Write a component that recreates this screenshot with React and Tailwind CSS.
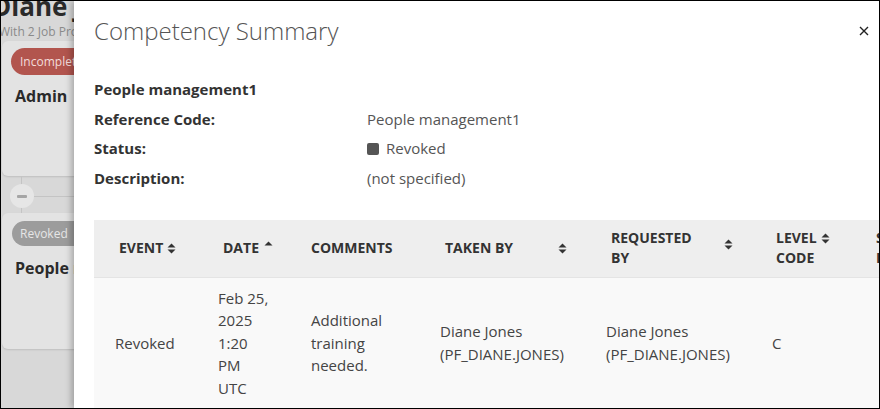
import React from "react";

const SortBoth = () => (
  <svg width="9" height="11" viewBox="0 0 9 11" className="shrink-0 inline-block">
    <path d="M4.5 0.5 L8.5 4.5 L0.5 4.5 Z" fill="#333" />
    <path d="M4.5 10.5 L8.5 6.5 L0.5 6.5 Z" fill="#333" />
  </svg>
);
const SortUp = () => (
  <svg width="9" height="6" viewBox="0 0 9 6" className="shrink-0">
    <path d="M4.5 0.5 L8.5 4.5 L0.5 4.5 Z" fill="#333" />
  </svg>
);

export default function App() {
  return (
    <div
      className="w-[880px] h-[409px] border border-black flex overflow-hidden bg-white text-[#333]"
      style={{ fontFamily: '"Open Sans", "Noto Sans", sans-serif' }}
    >
      {/* dimmed background */}
      <div className="w-[73px] shrink-0 bg-[#d8d8d8] flex flex-col overflow-hidden">
        <div className="ml-[-9px] mt-[-10px] text-[26px] font-bold leading-[30px] text-[#2a2a2a] whitespace-nowrap">
          Diane Jones
        </div>
        <div className="ml-[-2px] mt-[3px] text-[12px] leading-[16px] text-[#8a8a8a] whitespace-nowrap">
          With 2 Job Profiles
        </div>
        <div className="ml-[1px] mt-[1px] h-[135px] w-[80px] shrink-0 rounded-[6px] bg-[#e3e3e3] shadow-[0_1px_2px_rgba(0,0,0,0.12)] pt-[7px] pl-[9px]">
          <div className="h-[27px] w-[90px] rounded-full bg-[#b2554e] pl-[9px] text-[12px] leading-[27px] text-[#f3dcda] whitespace-nowrap">
            Incomplete
          </div>
          <div className="mt-[11px] ml-[4px] text-[16px] font-bold leading-[20px] text-[#2a2a2a] whitespace-nowrap">
            Admin
          </div>
        </div>
        <div className="relative h-[37px] shrink-0">
          <div className="absolute left-[20px] top-0 h-full w-px bg-[#c4c4c4]" />
          <div className="absolute left-[33px] top-[20px] h-px w-[50px] bg-[#c4c4c4]" />
          <div className="absolute left-[9px] top-[8px] h-[24px] w-[24px] rounded-full bg-[#e6e6e6] flex items-center justify-center">
            <div className="h-[3px] w-[10px] rounded-[1px] bg-[#a5a5a5]" />
          </div>
        </div>
        <div className="ml-[1px] h-[136px] w-[80px] shrink-0 rounded-[6px] bg-[#e3e3e3] shadow-[0_1px_2px_rgba(0,0,0,0.12)] pt-[8px] pl-[10px]">
          <div className="h-[25px] w-[90px] rounded-full bg-[#9c9c9c] pl-[8px] text-[12px] leading-[25px] text-[#e6e6e6] whitespace-nowrap">
            Revoked
          </div>
          <div className="mt-[12px] ml-[3px] text-[16px] font-bold leading-[20px] text-[#2a2a2a] whitespace-nowrap">
            People management1
          </div>
        </div>
      </div>

      {/* modal */}
      <div className="flex-1 min-w-0 bg-white shadow-[-3px_0_6px_rgba(0,0,0,0.25)] z-10 flex flex-col overflow-hidden pl-[20px]">
        <div className="flex items-start justify-between pt-[12px] pr-[10px]">
          <div className="text-[24px] font-light leading-[36px] text-[#555]">Competency Summary</div>
          <svg width="10" height="10" viewBox="0 0 10 10" className="mt-[13px]">
            <path d="M1 1 L9 9 M9 1 L1 9" stroke="#222" strokeWidth="1.4" />
          </svg>
        </div>

        <div className="mt-[26px] text-[15px] leading-[29.7px]">
          <div className="font-bold text-[#333]">People management1</div>
          <div className="flex">
            <div className="w-[273px] font-bold text-[#333]">Reference Code:</div>
            <div className="text-[#555]">People management1</div>
          </div>
          <div className="flex">
            <div className="w-[273px] font-bold text-[#333]">Status:</div>
            <div className="flex items-center gap-[7px] text-[#555]">
              <span className="inline-block h-[12px] w-[12px] rounded-[2px] bg-[#555]" />
              Revoked
            </div>
          </div>
          <div className="flex">
            <div className="w-[273px] font-bold text-[#333]">Description:</div>
            <div className="text-[#555]">(not specified)</div>
          </div>
        </div>

        <div className="mt-[26px] flex-1 overflow-hidden">
          <div className="w-[900px]">
            {/* header */}
            <div className="flex h-[58px] bg-[#eeeeee] border-b border-[#e4e4e4] text-[14px] font-bold leading-[20px] text-[#333] uppercase">
              <div className="w-[104px] pl-[25px] flex items-center gap-[4px]">
                <span>Event</span>
                <SortBoth />
              </div>
              <div className="w-[93px] pl-[25px] flex items-center gap-[5px]">
                <span>Date</span>
                <span className="mb-[8px]"><SortUp /></span>
              </div>
              <div className="w-[129px] pl-[20px] flex items-center">
                <span>Comments</span>
              </div>
              <div className="w-[166px] pl-[25px] flex items-center">
                <span className="w-[113px]">Taken by</span>
                <SortBoth />
              </div>
              <div className="w-[166px] pl-[25px] flex items-center">
                <span className="w-[113px]">Requested<br />by</span>
                <span className="self-start mt-[13px]"><SortBoth /></span>
              </div>
              <div className="w-[102px] pl-[24px] flex items-center">
                <div className="flex flex-col">
                  <div className="flex items-center gap-[4px]">
                    <span>Level</span>
                    <SortBoth />
                  </div>
                  <span>Code</span>
                </div>
              </div>
              <div className="w-[100px] pl-[22px] flex items-center">
                <span>Score<br />ID</span>
              </div>
            </div>
            {/* row */}
            <div className="flex h-[140px] bg-[#f9f9f9] text-[15px] leading-[22.5px] text-[#444] pt-[9px]">
              <div className="w-[104px] pl-[21px] flex items-center h-[112px]">Revoked</div>
              <div className="w-[93px] pl-[20px]">
                Feb 25,<br />2025<br />1:20<br />PM<br />UTC
              </div>
              <div className="w-[129px] pl-[20px] flex items-center h-[112px]">
                <span>Additional<br />training<br />needed.</span>
              </div>
              <div className="w-[166px] pl-[20px] flex items-center h-[112px]">
                <span>Diane Jones<br />(PF_DIANE.JONES)</span>
              </div>
              <div className="w-[166px] pl-[20px] flex items-center h-[112px]">
                <span>Diane Jones<br />(PF_DIANE.JONES)</span>
              </div>
              <div className="w-[102px] pl-[20px] flex items-center h-[112px]">C</div>
              <div className="w-[100px] pl-[20px]" />
            </div>
          </div>
        </div>
      </div>
    </div>
  );
}
